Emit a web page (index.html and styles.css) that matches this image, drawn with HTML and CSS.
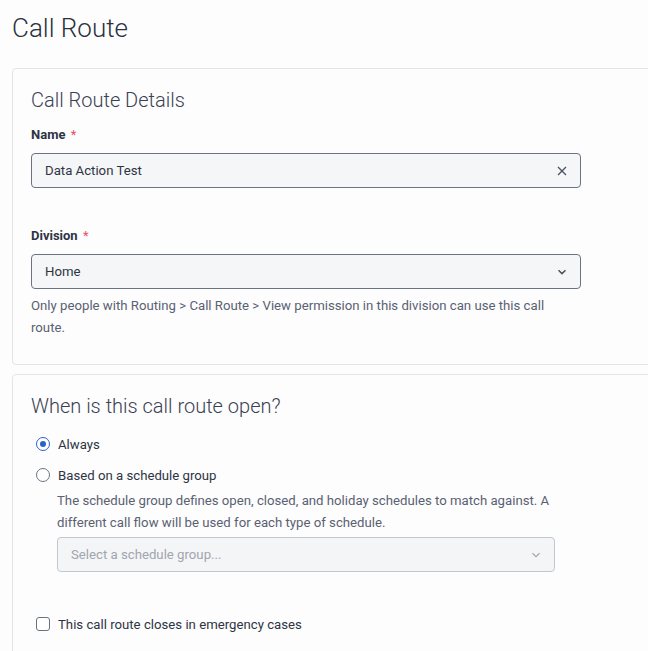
FILE: index.html
```html
<!DOCTYPE html>
<html>
<head>
<meta charset="utf-8">
<link rel="stylesheet" href="styles.css">
</head>
<body>
<div class="page">
  <h1 class="page-title">Call Route</h1>

  <section class="card card-details">
    <h2 class="card-title">Call Route Details</h2>

    <div class="field field-name">
      <label class="label">Name <span class="req">*</span></label>
      <div class="input">
        <span class="input-text">Data Action Test</span>
        <svg class="icon-x" width="10" height="10" viewBox="0 0 10 10"><path d="M1 1L9 9M9 1L1 9" stroke="#4a5160" stroke-width="1.3" fill="none"/></svg>
      </div>
    </div>

    <div class="field field-division">
      <label class="label">Division <span class="req">*</span></label>
      <div class="input">
        <span class="input-text">Home</span>
        <svg class="icon-chev" width="10" height="6" viewBox="0 0 10 6"><path d="M1.5 1.2L5 4.6L8.5 1.2" stroke="#4a5160" stroke-width="1.5" fill="none"/></svg>
      </div>
      <p class="help">Only people with Routing &gt; Call Route &gt; View permission in this division can use this call route.</p>
    </div>
  </section>

  <section class="card card-open">
    <h2 class="card-title">When is this call route open?</h2>

    <div class="radio-row">
      <span class="radio checked"></span>
      <span class="radio-label">Always</span>
    </div>
    <div class="radio-row">
      <span class="radio"></span>
      <span class="radio-label">Based on a schedule group</span>
    </div>
    <div class="sub">
      <p class="sub-help">The schedule group defines open, closed, and holiday schedules to match against. A different call flow will be used for each type of schedule.</p>
      <div class="input disabled">
        <span class="input-text placeholder">Select a schedule group...</span>
        <svg class="icon-chev" width="10" height="6" viewBox="0 0 10 6"><path d="M1.5 1.2L5 4.6L8.5 1.2" stroke="#a3a8b3" stroke-width="1.2" fill="none"/></svg>
      </div>
    </div>

    <div class="check-row">
      <span class="checkbox"></span>
      <span class="check-label">This call route closes in emergency cases</span>
    </div>
  </section>
</div>
</body>
</html>
```

FILE: styles.css
```css
html, body {
  margin: 0;
  padding: 0;
  background: #fdfdfd;
  overflow: hidden;
}
body {
  font-family: Roboto, "Liberation Sans", sans-serif;
  color: #2e3444;
  width: 648px;
  height: 651px;
}
.page {
  padding: 0 0 0 12px;
  width: 700px;
}
.page-title {
  margin: 0;
  padding-top: 11px;
  font-size: 26px;
  font-weight: 300;
  line-height: 34px;
  color: #2b3140;
  height: 57px;
}
.card {
  border: 1px solid #e1e4ea;
  border-radius: 4px;
  background: #fdfdfe;
  padding: 18px 18px 0 18px;
}
.card-details {
  height: 277px;
}
.card-open {
  margin-top: 9px;
  height: 400px;
}
.card-title {
  margin: 0;
  font-size: 20px;
  font-weight: 300;
  line-height: 26px;
  color: #3a4151;
}
.field-name {
  margin-top: 14px;
}
.field-division {
  margin-top: 40px;
}
.label {
  display: block;
  font-size: 13px;
  font-weight: 700;
  line-height: 16px;
  color: #2e3444;
  margin-bottom: 10px;
}
.req {
  color: #e6505d;
  font-weight: 400;
  margin-left: 2px;
}
.input {
  box-sizing: border-box;
  width: 550px;
  height: 35px;
  border: 1px solid #6b7282;
  border-radius: 4px;
  background: #f5f6f8;
  display: flex;
  align-items: center;
  justify-content: space-between;
  padding: 0 13px 0 13px;
}
.input-text {
  font-size: 13.2px;
  color: #2e3444;
}
.help {
  margin: 6px 0 0 0;
  font-size: 13.2px;
  line-height: 22px;
  color: #5a6171;
  width: 540px;
}
.radio-row {
  display: flex;
  align-items: center;
  gap: 8px;
  height: 20px;
  margin-left: 5px;
}
.card-open .radio-row:first-of-type {
  margin-top: 15px;
}
.radio-row + .radio-row {
  margin-top: 11px;
}
.radio {
  box-sizing: border-box;
  width: 14px;
  height: 14px;
  border-radius: 50%;
  border: 1.5px solid #6b7282;
  background: #fff;
  position: relative;
}
.radio.checked {
  border-color: #2a60c8;
}
.radio.checked::after {
  content: "";
  position: absolute;
  left: 2.5px;
  top: 2.5px;
  width: 6px;
  height: 6px;
  border-radius: 50%;
  background: #2a60c8;
}
.radio-label, .check-label {
  font-size: 13.2px;
  color: #2e3444;
}
.sub {
  margin-left: 26px;
  margin-top: 5px;
}
.sub-help {
  margin: 0;
  font-size: 13.2px;
  line-height: 22px;
  color: #5a6171;
  width: 520px;
}
.sub .input {
  margin-top: 3px;
  width: 498px;
}
.input.disabled {
  border-color: #c3c7cf;
  background: #f4f5f7;
}
.placeholder {
  color: #a0a5b0;
}
.check-row {
  display: flex;
  align-items: center;
  gap: 8px;
  margin-top: 42px;
  margin-left: 5px;
  height: 20px;
}
.checkbox {
  box-sizing: border-box;
  width: 14px;
  height: 14px;
  border: 1.5px solid #6b7282;
  border-radius: 3px;
  background: #fff;
}
```
